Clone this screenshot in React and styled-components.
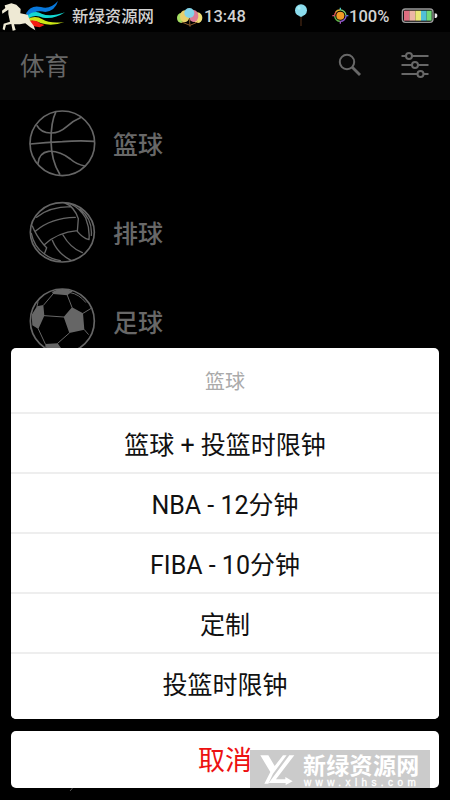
import React from "react";
import styled, { createGlobalStyle } from "styled-components";

const Global = createGlobalStyle`
  * { box-sizing: border-box; }
  body { margin: 0; background: #000; font-family: Roboto, "Noto Sans CJK SC", sans-serif; }
`;

const Screen = styled.main`
  position: relative;
  width: 450px;
  height: 800px;
  overflow: hidden;
  background: #000;
`;

const StatusBar = styled.header`
  display: grid;
  grid-template-columns: 72px 104px 28px 89px 39px 17px 52px 1fr;
  align-items: center;
  height: 32px;
  color: #d2d2d2;
  svg { display: block; }
`;

const Carrier = styled.span`
  padding-top: 2px;
  font-size: 16.4px;
  line-height: 30px;
  font-weight: 500;
  white-space: nowrap;
`;

const StatusText = styled.span`
  padding-top: 1px;
  font-size: 16.5px;
  line-height: 31px;
  font-weight: 500;
`;

const TitleBar = styled.div`
  display: flex;
  align-items: center;
  height: 68px;
  padding: 0 20px 2px;
  background: #080808;
  color: #666;
`;

const PageTitle = styled.h1`
  flex: 1;
  margin: 0;
  padding-top: 4px;
  font-size: 24.5px;
  line-height: 62px;
  font-weight: 400;
`;

const BarIcon = styled.svg`
  display: block;
  width: 30px;
  height: 30px;
  margin-left: ${(p) => p.$gap || "0"};
  fill: none;
  stroke: #686868;
  stroke-width: 2;
`;

const SportList = styled.ul`
  margin: 0;
  padding: 0 28px;
  list-style: none;
`;

const Sport = styled.li`
  display: flex;
  height: 89px;
  padding-top: 9px;
  gap: 15px;
  color: #686868;
  font-size: 25px;
  line-height: 74px;
  font-weight: 500;
`;

const Ball = styled.svg`
  width: 70px;
  height: 70px;
  fill: none;
  stroke: #666;
  stroke-width: 5;
  stroke-linecap: round;
  stroke-linejoin: round;
`;

const Seam = styled.path`
  stroke-width: ${(p) => p.$width};
`;

const PeekingIcon = styled.svg`
  position: absolute;
  left: 68px;
  bottom: 7px;
  width: 6px;
  height: 6px;
`;

const Overlay = styled.div`
  position: absolute;
  left: 11px;
  right: 11px;
  bottom: 12.5px;
  display: flex;
  flex-direction: column;
  gap: 12px;
`;

const Sheet = styled.section`
  overflow: hidden;
  border-radius: 5px;
  background: #fff;
`;

const SheetTitle = styled.div`
  height: 64px;
  color: #aaa;
  font-size: 20px;
  line-height: 68px;
  text-align: center;
`;

const Option = styled.button`
  display: flex;
  align-items: flex-start;
  justify-content: center;
  width: 100%;
  height: ${(p) => p.$height || "60px"};
  padding: 2px 0 0;
  border: 0;
  border-top: 2px solid #eee;
  background: #fff;
  color: #111;
  font: 400 25px/59px Roboto, "Noto Sans CJK SC", sans-serif;
  white-space: pre;
`;

const Cancel = styled.button`
  height: 56.5px;
  padding: 5px 0 0;
  border: 0;
  border-radius: 5px;
  background: #fff;
  color: #ed1111;
  font: 400 27px/51px Roboto, "Noto Sans CJK SC", sans-serif;
`;

const Watermark = styled.div`
  position: absolute;
  left: 250px;
  top: 750px;
  display: flex;
  width: 180px;
  height: 38px;
  padding-left: 9px;
  background: rgba(0, 0, 0, 0.205);
  color: #fff;
`;

const WatermarkText = styled.div`
  display: flex;
  flex-direction: column;
  gap: 2px;
  width: 120px;
  padding-top: 2px;
  margin-left: 7px;
`;

const WatermarkName = styled.div`
  margin-left: -1px;
  font: 700 23px/24px "Noto Sans CJK SC", sans-serif;
  letter-spacing: 0.3px;
  white-space: nowrap;
`;

const WatermarkUrl = styled.div`
  font: 400 10px/10px "Liberation Sans", sans-serif;
  letter-spacing: 4.4px;
  white-space: nowrap;
  -webkit-text-stroke: 0.3px #fff;
`;

const Horse = () => (
  <svg width="68" height="32" viewBox="0 0 204 96">
    <path fill="#0878dc" d="M78 40 Q93 13 123 21 Q151 29 174 3 Q166 32 136 36 Q107 27 84 50Z" />
    <path fill="#12d8d2" d="M79 49 Q104 28 125 41 Q151 52 195 37 Q162 59 129 53 Q103 42 84 56Z" />
    <path fill="#cce616" d="M82 57 Q107 45 127 58 Q151 72 193 66 Q157 80 124 70 Q100 58 84 65Z" />
    <path fill="#f51c12" d="M82 63 Q109 58 119 70 L134 75 L119 82 L97 78Z" />
    <path fill="#eee9d4" d="M20 14 L34 10 L49 14 L62 27 L61 40 L83 44 L90 62 L101 77 L106 91 L91 82 L76 70 L59 73 L42 73 L47 90 L38 92 L34 72 L18 75 L14 91 L8 88 L11 71 L30 65 L25 42 L25 29 L7 41 L6 32 L16 24 L14 16Z" />
  </svg>
);

const Balloons = () => (
  <svg width="28" height="32" viewBox="0 0 84 96">
    <ellipse cx="16" cy="54" rx="13" ry="15" fill="#a5df62" />
    <ellipse cx="65" cy="53" rx="14" ry="16" fill="#efdc75" />
    <ellipse cx="26" cy="49" rx="14" ry="18" fill="#e8d06c" />
    <ellipse cx="53" cy="48" rx="14" ry="18" fill="#dc7b96" />
    <path d="M40 50 L42 80 M17 66 L42 76 L65 66" stroke="#8c5b2c" strokeWidth="3" fill="none" />
    <circle cx="40" cy="39" r="15" fill="#83d4e9" />
  </svg>
);

const Balloon = () => (
  <svg width="17" height="32" viewBox="0 0 51 96">
    <path d="M24 48 V78" stroke="#563018" strokeWidth="3" />
    <path d="M19 50 L24 44 L29 50Z" fill="#86c8d6" />
    <circle cx="24" cy="31" r="18" fill="#8bdced" />
    <circle cx="18" cy="24" r="5" fill="#a9edf4" />
  </svg>
);

const Compass = () => (
  <svg width="17" height="32" viewBox="0 0 51 96" fill="none" strokeWidth="4">
    <path d="M11 36 A17 17 0 0 1 25 30" stroke="#d8ae32" />
    <path d="M25 30 A17 17 0 0 1 42 47" stroke="#7cc96a" />
    <path d="M42 47 A17 17 0 0 1 25 64" stroke="#8c58cf" />
    <path d="M25 64 A17 17 0 0 1 8 47" stroke="#62b84a" />
    <path d="M8 47 A17 17 0 0 1 12 36" stroke="#e35e4a" />
    <path d="M25 23 V30" stroke="#4cc5c0" />
    <path d="M42 47 H49" stroke="#5970df" />
    <path d="M25 64 V71" stroke="#a855c9" />
    <path d="M1 47 H8" stroke="#d44d76" />
    <circle cx="25" cy="47" r="12" fill="#f19a25" />
  </svg>
);

const Battery = () => (
  <svg width="38" height="32" viewBox="0 0 114 96">
    <rect x="4" y="27" width="92" height="40" rx="9" fill="#111" stroke="#999" strokeWidth="4" />
    <path fill="#df6e80" d="M9 32 H25 V62 H9Z" />
    <path fill="#edb6a5" d="M25 32 H43 V62 H25Z" />
    <path fill="#eae775" d="M43 32 H60 V62 H43Z" />
    <path fill="#50bfd8" d="M60 32 H77 V62 H60Z" />
    <path fill="#71d977" d="M77 32 H92 V62 H77Z" />
    <path fill="#eee" d="M101 40 Q109 40 109 47 Q109 54 101 54Z" />
  </svg>
);

const Basketball = () => (
  <Ball viewBox="24 27 210 210">
    <circle cx="127" cy="130" r="97" />
    <path d="M107 37 Q93 65 93 123 Q94 183 119 222 M31 132 Q76 127 127 125 Q177 121 222 124" />
    <path d="M51 77 Q63 99 92 99 Q117 100 141 79 Q161 61 181 53 M54 190 Q57 158 86 154 Q119 152 151 177 Q169 193 194 198" />
  </Ball>
);

const Volleyball = () => (
  <Ball viewBox="24 24 210 210">
    <ellipse cx="127" cy="127" rx="96" ry="89" />
    <Seam $width="4" d="M50 82 Q88 50 152 50 M47 123 Q92 84 166 82 M72 165 Q112 127 172 122 M37 108 Q48 136 72 165 L80 173 L73 192 M135 39 Q162 49 175 86 L172 124 Q188 144 207 149 M150 41 Q178 53 197 84 Q210 116 207 149 M180 57 Q218 88 214 136 M34 130 Q42 170 73 192 Q92 207 121 212 M97 151 Q112 190 153 211 M129 135 Q151 174 187 188" />
  </Ball>
);

const Football = () => (
  <Ball viewBox="24 36 210 210">
    <circle cx="127" cy="138" r="96" />
    <path fill="#666" stroke="none" d="M96 51 Q123 34 158 49 L142 61 L99 57Z M35 119 L51 94 L70 90 L73 122 L55 162 L37 151Z M131 126 L156 97 L189 115 L193 164 L148 174Z M76 207 L113 205 L134 235 Q96 235 76 216Z" />
    <Seam $width="3" d="M99 57 L71 90 M142 61 L156 97 M151 53 Q177 57 197 82 M189 115 L212 101 M73 122 L131 126 M55 162 L76 207 M148 174 L113 205 M193 164 L205 178 M51 94 L54 81" />
  </Ball>
);

const OPTIONS = ["篮球 + 投篮时限钟", "NBA - 12分钟", "FIBA - 10分钟", "定制", "投篮时限钟"];

export default function App() {
  return (
    <Screen>
      <Global />
      <StatusBar>
        <Horse />
        <Carrier>新绿资源网</Carrier>
        <Balloons />
        <StatusText>13:48</StatusText>
        <Balloon />
        <Compass />
        <StatusText>100%</StatusText>
        <Battery />
      </StatusBar>
      <TitleBar>
        <PageTitle>体育</PageTitle>
        <BarIcon viewBox="0 0 30 30">
          <circle cx="12" cy="12" r="7.2" />
          <Seam $width="2.8" d="M17 17 L25 25" />
        </BarIcon>
        <BarIcon $gap="35px" viewBox="0 0 30 30">
          <path d="M1.5 6 H6 M12 6 H28.5 M1.5 15 H12 M18 15 H28.5 M1.5 24 H17.5 M23.5 24 H28.5" />
          <circle cx="9" cy="6" r="3" />
          <circle cx="15" cy="15" r="3" />
          <circle cx="20.5" cy="24" r="3" />
        </BarIcon>
      </TitleBar>
      <SportList>
        <Sport><Basketball />篮球</Sport>
        <Sport><Volleyball />排球</Sport>
        <Sport><Football />足球</Sport>
      </SportList>
      <PeekingIcon viewBox="0 0 6 6">
        <path d="M5 0 Q4 2 2 4" fill="none" stroke="#555" />
      </PeekingIcon>
      <Overlay>
        <Sheet>
          <SheetTitle>篮球</SheetTitle>
          {OPTIONS.map((label, i) => (
            <Option key={label} $height={i === OPTIONS.length - 1 ? "67px" : "60px"}>{label}</Option>
          ))}
        </Sheet>
        <Cancel>取消</Cancel>
      </Overlay>
      <Watermark>
        <svg width="38" height="38" viewBox="0 0 114 114" fill="#fff">
          <path d="M4 16 H28 L47 48 L72 16 H83 L42 71 L28 101 H16 L34 66Z" />
          <path d="M91 16 H106 L59 77 L51 88 H79 V81 L101 94 L80 105 V99 H29Z" />
        </svg>
        <WatermarkText>
          <WatermarkName>新绿资源网</WatermarkName>
          <WatermarkUrl>www.xlhs.com</WatermarkUrl>
        </WatermarkText>
      </Watermark>
    </Screen>
  );
}
